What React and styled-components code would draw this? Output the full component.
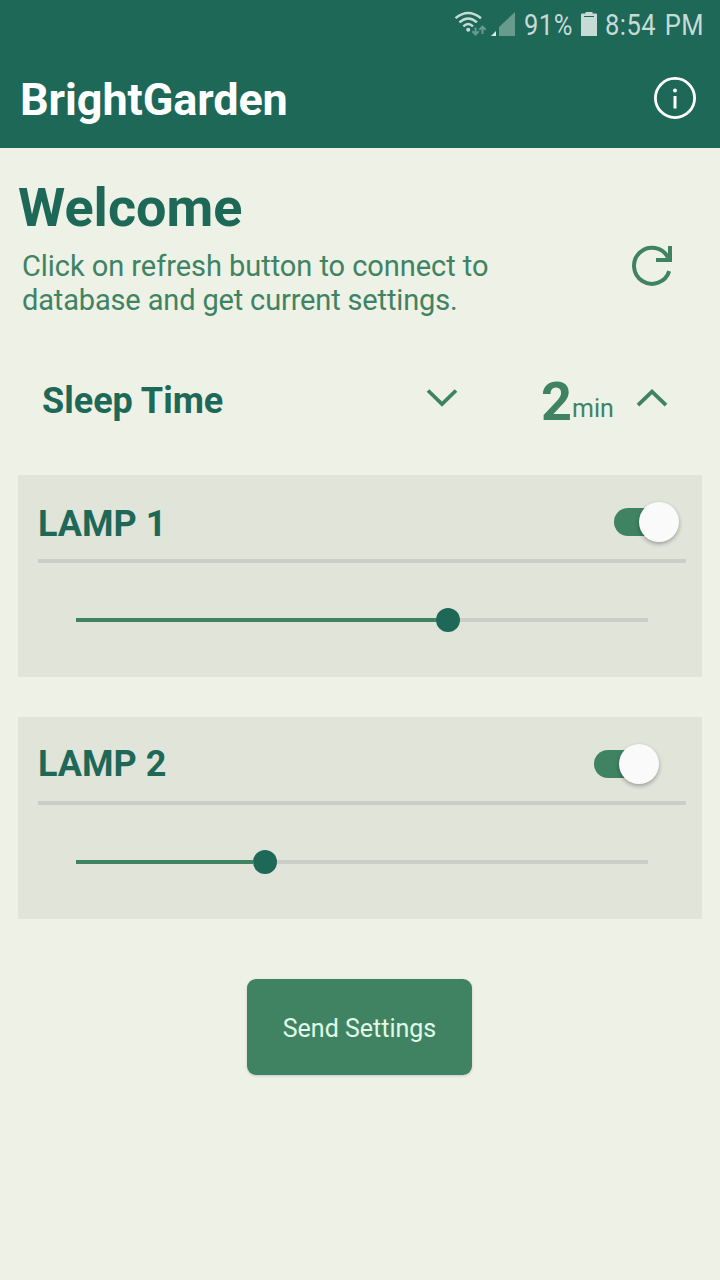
import React from "react";
import styled, { createGlobalStyle } from "styled-components";

const GlobalStyle = createGlobalStyle`
  *, *::before, *::after { box-sizing: border-box; }
  body {
    margin: 0;
    background: #edf1e6;
    font-family: Roboto, "Liberation Sans", sans-serif;
  }
  h1, h2, h3, p { margin: 0; }
  svg { display: block; flex: none; }
  button { border: 0; padding: 0; background: none; font: inherit; color: inherit; }
`;

const Screen = styled.div`
  display: flex;
  flex-direction: column;
  width: 720px;
  height: 1280px;
  background: #edf1e6;
  overflow: hidden;
`;

const Header = styled.header`
  height: 148px;
  background: #1e6858;
`;

const StatusBar = styled.div`
  display: flex;
  align-items: center;
  height: 48px;
  padding-left: 454px;
  color: #c6dbd6;
`;

const StatusText = styled.span`
  flex: none;
  width: ${({ $width }) => $width}px;
  margin-left: ${({ $gap }) => $gap}px;
  padding-top: 2px;
  font-size: 30px;
  line-height: 46px;
  letter-spacing: 0.6px;
  word-spacing: 2px;
  white-space: nowrap;
  transform: scaleX(${({ $squeeze }) => $squeeze});
  transform-origin: left center;
`;

const TitleBar = styled.div`
  display: flex;
  align-items: center;
  justify-content: space-between;
  height: 100px;
  padding: 0 23px 0 20px;
`;

const AppTitle = styled.h1`
  padding-top: 3px;
  color: #fff;
  font-size: 45px;
  font-weight: 700;
  letter-spacing: -0.1px;
  line-height: 60px;
`;

const IconButton = styled.button`
  display: flex;
  color: ${({ $color }) => $color || "#3f8363"};
`;

const Intro = styled.section`
  display: flex;
  justify-content: space-between;
  height: 202px;
  padding: 29px 45px 0 18px;
`;

const Welcome = styled.h2`
  color: #1e6858;
  font-size: 54px;
  font-weight: 700;
  line-height: 62px;
`;

const Hint = styled.p`
  margin: 10px 0 0 4px;
  color: #3f8363;
  font-size: 29px;
  line-height: 34px;
  white-space: nowrap;
`;

const HintLine = styled.span`
  display: block;
  letter-spacing: ${({ $tracking }) => $tracking}px;
`;

const RefreshSlot = styled.div`
  padding-top: 67px;
`;

const SleepRow = styled.section`
  display: flex;
  height: 125px;
  padding: 21px 52px 0 42px;
`;

const SleepLabel = styled.h3`
  width: 384px;
  padding-top: 10px;
  color: #1e6858;
  font-size: 36px;
  font-weight: 700;
  line-height: 40px;
`;

const ArrowSlot = styled.div`
  padding-top: 16px;
`;

const Duration = styled.div`
  display: flex;
  align-items: flex-start;
  width: 95px;
  margin: 0 0 0 83px;
  color: #3f8363;
  line-height: 60px;
`;

const Minutes = styled.span`
  padding-top: 1px;
  font-size: 54px;
  font-weight: 700;
`;

const Unit = styled.span`
  padding-top: 8px;
  font-size: 25px;
`;

const LampList = styled.section`
  display: flex;
  flex-direction: column;
  gap: 40px;
  padding: 0 18px;
`;

const LampCard = styled.article`
  height: 202px;
  padding: 0 16px 0 20px;
  background: #e0e4d9;
`;

const LampHead = styled.div`
  display: flex;
  justify-content: space-between;
  height: 88px;
  padding: 27px ${({ $inset }) => $inset}px 0 0;
  border-bottom: 4px solid #cacec4;
`;

const LampName = styled.h3`
  margin-top: ${({ $drop }) => $drop}px;
  color: #1e6858;
  font-size: 36px;
  font-weight: 700;
  line-height: 40px;
`;

const Toggle = styled.button`
  display: flex;
  align-items: center;
  width: 65px;
  height: 40px;
`;

const ToggleTrack = styled.span`
  flex: none;
  width: 50px;
  height: 28px;
  margin-right: -25px;
  border-radius: 14px;
  background: #3f8363;
`;

const Knob = styled.span`
  flex: none;
  width: 40px;
  height: 40px;
  border-radius: 50%;
  background: #fafafa;
  box-shadow: 0 2px 4px rgba(0, 0, 0, 0.3);
`;

const Slider = styled.div`
  display: flex;
  align-items: center;
  height: 24px;
  margin: 45px 38px 0;
`;

const SliderFill = styled.span`
  width: ${({ $value }) => $value}px;
  height: 4px;
  background: #3f8363;
`;

const SliderThumb = styled.span`
  flex: none;
  width: 24px;
  height: 24px;
  border-radius: 50%;
  background: #1e6858;
`;

const SliderRest = styled.span`
  flex: 1;
  height: 4px;
  background: #cacec4;
`;

const SendButton = styled.button`
  align-self: center;
  width: 225px;
  height: 96px;
  margin: 60px 1px 0 0;
  padding-top: 3px;
  border-radius: 9px;
  background: #3f8363;
  box-shadow: 0 1px 3px rgba(0, 0, 0, 0.16);
  color: #e0fbe8;
  font-size: 25px;
`;

const WifiIcon = () => (
  <svg width="34" height="30" viewBox="0 0 34 30" fill="none" stroke="currentColor">
    <path d="M1.5 9.2Q14 -1.2 27 9.2" strokeWidth="2.4" />
    <path d="M5.4 13.4Q14.2 5.4 23 13.4" strokeWidth="2.4" />
    <path d="M9.3 17.3Q14.2 12.6 19 17.3" strokeWidth="2.4" />
    <circle cx="14.2" cy="20.8" r="2" fill="currentColor" stroke="none" />
    <g stroke="#689a8e" strokeWidth="2">
      <path d="M21.5 18.5v7M18.3 22.3l3.2 3.2 3.2-3.2" />
      <path d="M28.5 25v-7.5M25.3 20.8l3.2-3.2 3.2 3.2" />
    </g>
  </svg>
);

const SignalIcon = () => (
  <svg width="27" height="26" viewBox="0 0 27 26">
    <path d="M3 25h5v-5z" fill="#dcebe7" />
    <path d="M11 25V16L27 1v24z" fill="#689a8e" />
  </svg>
);

const BatteryIcon = () => (
  <svg width="16" height="26" viewBox="0 0 16 26" fill="currentColor">
    <path d="M4.5 1h7v1.5H15q1 0 1 1V25H0V3.5q0-1 1-1h3.5z" />
    <path d="M3 5.5h10" stroke="#1e6858" strokeWidth="1" />
  </svg>
);

const InfoIcon = () => (
  <svg width="44" height="44" viewBox="0 0 44 44" fill="none" stroke="currentColor">
    <circle cx="22" cy="22" r="19.6" strokeWidth="2.8" />
    <path d="M22 20v12.5" strokeWidth="3" />
    <circle cx="22" cy="14.5" r="2" fill="currentColor" stroke="none" />
  </svg>
);

const RefreshIcon = () => (
  <svg width="44" height="44" viewBox="0 0 44 44" fill="none" stroke="currentColor" strokeWidth="4">
    <path d="M38.2 27.2A18 18 0 1 1 37 13.5" />
    <path d="M39 2v14M25 16h16" />
  </svg>
);

const ChevronIcon = ({ up }) => (
  <svg width="32" height="24" viewBox="0 0 32 24" fill="none" stroke="currentColor" strokeWidth="3.8">
    <path d={up ? "M2 18.2L16 4.7L30 18.2" : "M2 3.5L16 17L30 3.5"} />
  </svg>
);

const lamps = [
  { name: "LAMP 1", level: 360, inset: 7, drop: 2 },
  { name: "LAMP 2", level: 177, inset: 27, drop: 0 },
];

export default function App() {
  return (
    <>
      <GlobalStyle />
      <Screen>
        <Header>
          <StatusBar>
            <WifiIcon />
            <SignalIcon />
            <StatusText $gap={9} $width={57} $squeeze={0.85}>91%</StatusText>
            <BatteryIcon />
            <StatusText $gap={8} $width={100} $squeeze={0.85}>8:54 PM</StatusText>
          </StatusBar>
          <TitleBar>
            <AppTitle>BrightGarden</AppTitle>
            <IconButton $color="#fff" aria-label="Info">
              <InfoIcon />
            </IconButton>
          </TitleBar>
        </Header>

        <Intro>
          <div>
            <Welcome>Welcome</Welcome>
            <Hint>
              <HintLine $tracking={-0.05}>Click on refresh button to connect to</HintLine>
              <HintLine $tracking={-0.15}>database and get current settings.</HintLine>
            </Hint>
          </div>
          <RefreshSlot>
            <IconButton aria-label="Refresh">
              <RefreshIcon />
            </IconButton>
          </RefreshSlot>
        </Intro>

        <SleepRow>
          <SleepLabel>Sleep Time</SleepLabel>
          <ArrowSlot>
            <IconButton aria-label="Decrease">
              <ChevronIcon />
            </IconButton>
          </ArrowSlot>
          <Duration>
            <Minutes>2</Minutes>
            <Unit>min</Unit>
          </Duration>
          <ArrowSlot>
            <IconButton aria-label="Increase">
              <ChevronIcon up />
            </IconButton>
          </ArrowSlot>
        </SleepRow>

        <LampList>
          {lamps.map((lamp) => (
            <LampCard key={lamp.name}>
              <LampHead $inset={lamp.inset}>
                <LampName $drop={lamp.drop}>{lamp.name}</LampName>
                <Toggle aria-label={lamp.name}>
                  <ToggleTrack />
                  <Knob />
                </Toggle>
              </LampHead>
              <Slider>
                <SliderFill $value={lamp.level} />
                <SliderThumb />
                <SliderRest />
              </Slider>
            </LampCard>
          ))}
        </LampList>

        <SendButton>Send Settings</SendButton>
      </Screen>
    </>
  );
}
